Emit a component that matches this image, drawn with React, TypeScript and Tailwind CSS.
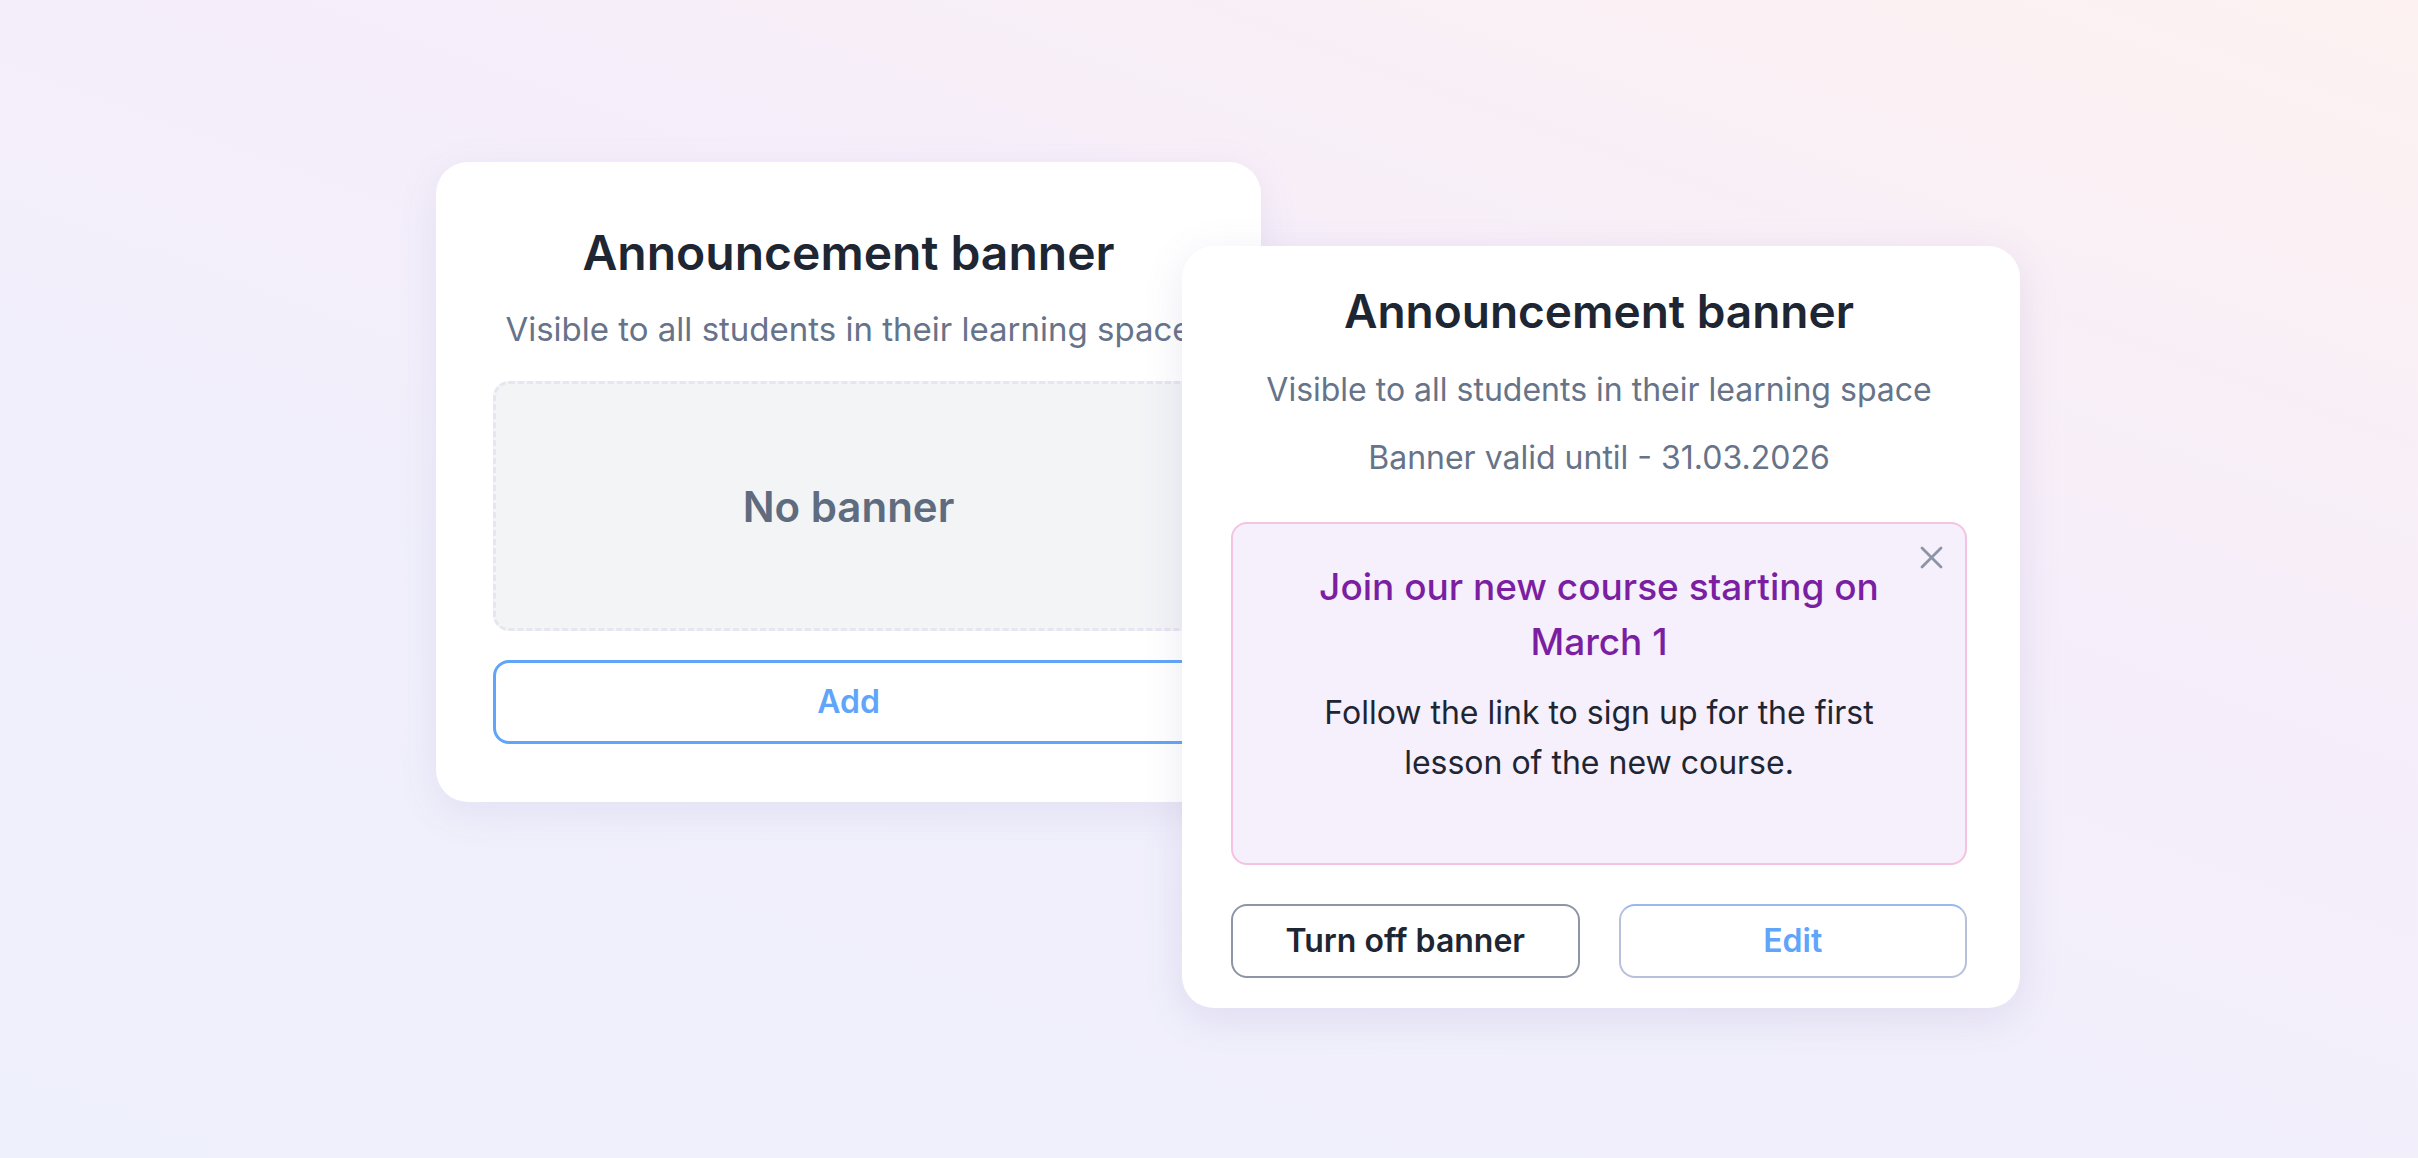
import React from 'react'

function CloseIcon() {
  return (
    <svg width="23" height="23" viewBox="0 0 23 23" fill="none" stroke="#8b95a7" strokeWidth="2.8" strokeLinecap="round">
      <path d="M2 2 L21 21" />
      <path d="M21 2 L2 21" />
    </svg>
  )
}

function EmptyCard() {
  return (
    <div className="flex w-[825px] shrink-0 flex-col rounded-[32px] bg-white px-[57px] pt-[61px] pb-[58px] shadow-[0_10px_40px_rgba(110,100,170,0.10)]">
      <h2 className="text-center text-[48px] leading-[60px] font-semibold text-[#1e2633]">
        Announcement banner
      </h2>
      <p className="mt-[26px] text-center text-[33px] leading-[40px] whitespace-nowrap text-[#667389]">
        Visible to all students in their learning space
      </p>
      <div className="mt-[32px] flex h-[250px] items-center justify-center rounded-[16px] border-[3px] border-dashed border-[#e6e5f0] bg-[#f3f4f6]">
        <span className="text-[42px] font-semibold text-[#5f6b7e]">No banner</span>
      </div>
      <button className="mt-[29px] flex h-[84px] items-center justify-center rounded-[16px] border-[3px] border-[#60a5fa] bg-white text-[32px] font-semibold text-[#60a5fa]">
        Add
      </button>
    </div>
  )
}

function ActiveCard() {
  return (
    <div className="relative z-10 mt-[84px] -ml-[79px] flex w-[838px] shrink-0 flex-col rounded-[32px] bg-white pt-[36px] pr-[53px] pb-[30px] pl-[49px] shadow-[0_10px_40px_rgba(110,100,170,0.14)]">
      <h2 className="text-center text-[46px] leading-[58px] font-semibold text-[#1e2633]">
        Announcement banner
      </h2>
      <p className="mt-[30px] text-center text-[32px] leading-[40px] text-[#667389]">
        Visible to all students in their learning space
      </p>
      <p className="mt-[28px] text-center text-[32px] leading-[40px] text-[#667389]">
        Banner valid until - 31.03.2026
      </p>
      <div className="relative mt-[44px] flex h-[343px] flex-col items-center rounded-[16px] border-2 border-[#f4c3e2] bg-[#f6effc] px-[50px] pt-[35px]">
        <div className="absolute top-[22px] right-[22px]">
          <CloseIcon />
        </div>
        <h3 className="text-center text-[37px] leading-[55px] font-medium whitespace-nowrap text-[#7b1fa2]">
          Join our new course starting on
          <br />
          March 1
        </h3>
        <p className="mt-[19px] text-center text-[32px] leading-[50px] text-[#1e2633]">
          Follow the link to sign up for the first
          <br />
          lesson of the new course.
        </p>
      </div>
      <div className="mt-[39px] grid grid-cols-2 gap-[39px]">
        <button className="flex h-[74px] items-center justify-center rounded-[16px] border-2 border-[#8d95a6] bg-white text-[32px] font-semibold text-[#1e2633]">
          Turn off banner
        </button>
        <button className="flex h-[74px] items-center justify-center rounded-[16px] border-2 border-[#b8c0dc] border-t-[#9bb8ee] bg-white text-[32px] font-semibold text-[#60a5fa]">
          Edit
        </button>
      </div>
    </div>
  )
}

export default function App() {
  return (
    <div className="flex h-[1158px] w-full items-start bg-[linear-gradient(20deg,#eef0fc_0%,#f1effb_40%,#f6eefa_65%,#fdf2f1_100%)] pt-[162px] pl-[436px] font-['Inter',sans-serif]">
      <EmptyCard />
      <ActiveCard />
    </div>
  )
}
